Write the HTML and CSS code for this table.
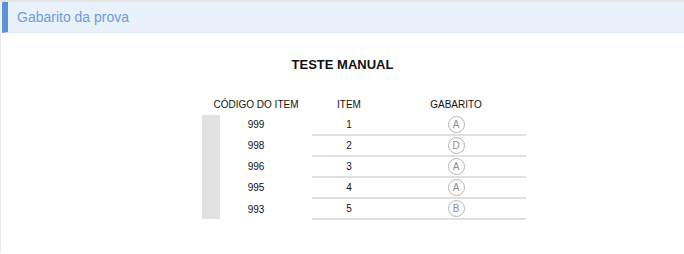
FILE: index.html
```html
<!DOCTYPE html>
<html lang="pt">
<head>
<meta charset="utf-8">
<title>Gabarito da prova</title>
<link rel="stylesheet" href="styles.css">
</head>
<body>
<div class="page">
  <div class="panel-head">Gabarito da prova</div>
  <h1 class="title">TESTE MANUAL</h1>
  <table class="gab">
    <colgroup>
      <col class="c-code"><col class="c-gap"><col class="c-item"><col class="c-ans">
    </colgroup>
    <thead>
      <tr><th>CÓDIGO DO ITEM</th><th></th><th>ITEM</th><th>GABARITO</th></tr>
    </thead>
    <tbody>
      <tr><td class="code">999</td><td></td><td class="ln">1</td><td class="ln"><span class="opt">A</span></td></tr>
      <tr><td class="code">998</td><td></td><td class="ln">2</td><td class="ln"><span class="opt">D</span></td></tr>
      <tr><td class="code">996</td><td></td><td class="ln">3</td><td class="ln"><span class="opt">A</span></td></tr>
      <tr><td class="code">995</td><td></td><td class="ln">4</td><td class="ln"><span class="opt">A</span></td></tr>
      <tr><td class="code">993</td><td></td><td class="ln">5</td><td class="ln"><span class="opt">B</span></td></tr>
    </tbody>
  </table>
</div>
</body>
</html>
```
FILE: styles.css
```css
html, body { margin: 0; padding: 0; background: #fff; }
body { font-family: "Liberation Sans", Arial, sans-serif; color: #222; }
.page {
  border-top: 2px solid #e4e4e4;
  border-left: 1px solid #ececec;
  min-height: 252px;
  box-sizing: border-box;
}
.panel-head {
  height: 31px;
  margin-left: 1px;
  background: #e9f1fb;
  border-left: 6px solid #5b93d9;
  border-bottom: 1px solid #dfe8f2;
  box-sizing: border-box;
  padding-left: 9px;
  font-size: 14px;
  line-height: 30px;
  color: #6f9cd9;
}
.title {
  margin: 24px 0 0 0;
  text-align: center;
  font-size: 13px;
  line-height: 16px;
  font-weight: bold;
  color: #111;
}
.gab {
  margin: 21px 0 0 201px;
  border-collapse: collapse;
  table-layout: fixed;
  width: 324px;
  font-size: 10px;
}
.c-code { width: 108px; }
.c-gap { width: 2px; }
.c-item { width: 74px; }
.c-ans { width: 140px; }
.gab th {
  font-weight: normal;
  font-size: 10px;
  height: 21px;
  padding: 0;
  text-align: center;
  vertical-align: middle;
  white-space: nowrap;
  color: #111;
}
.gab td {
  padding: 0;
  height: 19px;
  text-align: center;
  vertical-align: middle;
  color: #111;
}
.gab td.code {
  background: linear-gradient(to right, #e2e2e2 18px, transparent 18px);
  border-bottom: 2px solid transparent;
}
.gab tbody tr:last-child td.code { border-bottom: 0; }
.gab td.ln { border-bottom: 2px solid #e0e0e0; }
.opt {
  display: inline-block;
  width: 15px;
  height: 15px;
  border: 1px solid #b4b4b4;
  border-radius: 50%;
  font-size: 10px;
  line-height: 16px;
  color: #8c8c8c;
  text-align: center;
  vertical-align: middle;
}
```
